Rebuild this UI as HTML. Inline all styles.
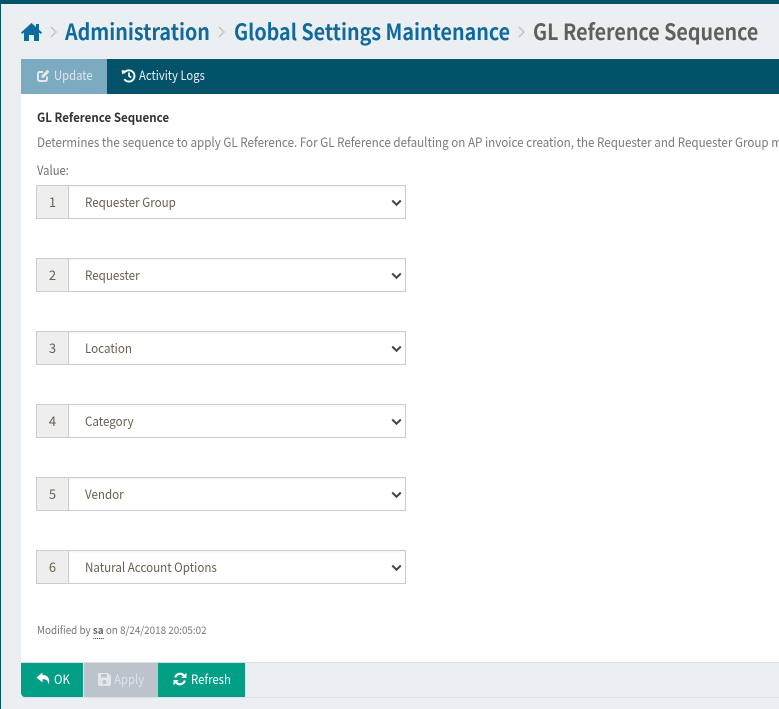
<!DOCTYPE html>
<html lang="en">
<head>
<meta charset="utf-8">
<title>GL Reference Sequence</title>
<style>
html,body{margin:0;padding:0;width:779px;height:709px;overflow:hidden;background:#eceff1}
body{position:relative;font-family:"Noto Sans CJK JP","Liberation Sans",sans-serif;color:#6b6b6b}
.a{position:absolute;white-space:nowrap;transform-origin:0 50%}
.crumb{font-size:22px;font-weight:700;line-height:30px;top:16px;color:#106a9c;transform:scaleX(.895)}
.sep{top:24px;width:16px;height:16px}
.tabtxt{font-size:13px;line-height:20px;top:65px;transform:scaleX(.867)}
.addon{position:absolute;left:36px;width:31px;height:32px;background:#eee;border:1px solid #ccc;font-size:13px;line-height:32px;text-align:center;color:#6a5f50}
.sel{position:absolute;left:69px;width:336px;height:32px;background:#fff;border:1px solid #ccc;border-left:0;box-shadow:inset 0 1px 2px rgba(0,0,0,.05);font-size:13px;line-height:32px;color:#6a5f50}
.sel span{position:absolute;left:16px;top:0;white-space:nowrap;transform-origin:0 50%;transform:scaleX(.892)}
.sel svg{position:absolute;right:3px;top:13px}
.btn{position:absolute;top:663px;height:34px;color:#fff;font-size:13px;line-height:32px}
.btn svg{position:absolute}
.btn span{position:absolute;top:0;white-space:nowrap;transform-origin:0 50%;transform:scaleX(.875)}
</style>
</head>
<body>
<div class="a" style="left:0;top:0;width:779px;height:4px;background:#02526a"></div>
<div class="a" style="left:0;top:0;width:1px;height:709px;background:#02526a"></div>

<svg class="a" style="left:21px;top:23px" width="21" height="18" viewBox="0 0 21 18"><path fill="#106a9c" d="M10.500 0L15 4V1h3v5.700L21 9.500l-1.300 1.500L18 9.500V18h-5v-6H8v6H3V9.500L1.300 11 0 9.500z"/></svg>
<svg class="a sep" style="left:46px" viewBox="0 0 16 16"><path d="M5 3l5 5-5 5" fill="none" stroke="#c4c8ca" stroke-width="1.600"/></svg>
<div class="a crumb" style="left:65px">Administration</div>
<svg class="a sep" style="left:214px" viewBox="0 0 16 16"><path d="M5 3l5 5-5 5" fill="none" stroke="#c4c8ca" stroke-width="1.600"/></svg>
<div class="a crumb" style="left:234px">Global Settings Maintenance</div>
<svg class="a sep" style="left:514px" viewBox="0 0 16 16"><path d="M5 3l5 5-5 5" fill="none" stroke="#c4c8ca" stroke-width="1.600"/></svg>
<div class="a crumb" style="left:533px;color:#5f5f5f">GL Reference Sequence</div>

<div class="a" style="left:21px;top:59px;width:758px;height:35px;background:#02526a"></div>
<div class="a" style="left:21px;top:59px;width:86px;height:35px;background:#7baac1"></div>
<svg class="a" style="left:36px;top:68px" width="15" height="15" viewBox="0 0 15 15"><path d="M11 8.500v3a1.500 1.500 0 0 1-1.500 1.500h-6A1.500 1.500 0 0 1 2 11.500v-6A1.500 1.500 0 0 1 3.500 4H7" fill="none" stroke="#dfe9ee" stroke-width="2"/><path d="M5.500 7.500L11.300 1.700l2.200 2.200L7.700 9.700H5.500z" fill="#dfe9ee"/></svg>
<div class="a tabtxt" style="left:54px;color:#dbe7ed">Update</div>
<svg class="a" style="left:121px;top:68px" width="15" height="15" viewBox="0 0 15 15"><path d="M3 5.200A5.600 5.600 0 1 1 3.300 11.200" fill="none" stroke="#fff" stroke-width="1.900"/><path d="M.6 2.200L5.600 2.600 1.300 6.600z" fill="#fff"/><path d="M8 4.500V8l2.300 1.600" fill="none" stroke="#fff" stroke-width="1.700"/></svg>
<div class="a tabtxt" style="left:139px;color:#eaf2f5">Activity Logs</div>

<div class="a" style="left:21px;top:94px;width:758px;height:568px;background:#fff"></div>
<div class="a" style="left:37px;top:108px;font-size:12.500px;font-weight:700;line-height:18px;color:#333;transform:scaleX(.923)">GL Reference Sequence</div>
<div class="a" style="left:37px;top:133px;font-size:13px;line-height:18px;color:#7b7b7b;transform:scaleX(.893)">Determines the sequence to apply GL Reference. For GL Reference defaulting on AP invoice creation, the Requester and Requester Group may</div>
<div class="a" style="left:37px;top:161px;font-size:13px;line-height:18px;color:#6f6f6f;transform:scaleX(.865)">Value:</div>

<div class="addon" style="top:185px">1</div>
<div class="sel" style="top:185px"><span>Requester Group</span><svg width="11" height="8" viewBox="0 0 11 8"><path d="M1.200 1.500L5.500 5.700 9.800 1.500" fill="none" stroke="#444" stroke-width="2"/></svg></div>
<div class="addon" style="top:258px">2</div>
<div class="sel" style="top:258px"><span>Requester</span><svg width="11" height="8" viewBox="0 0 11 8"><path d="M1.200 1.500L5.500 5.700 9.800 1.500" fill="none" stroke="#444" stroke-width="2"/></svg></div>
<div class="addon" style="top:331px">3</div>
<div class="sel" style="top:331px"><span>Location</span><svg width="11" height="8" viewBox="0 0 11 8"><path d="M1.200 1.500L5.500 5.700 9.800 1.500" fill="none" stroke="#444" stroke-width="2"/></svg></div>
<div class="addon" style="top:404px">4</div>
<div class="sel" style="top:404px"><span>Category</span><svg width="11" height="8" viewBox="0 0 11 8"><path d="M1.200 1.500L5.500 5.700 9.800 1.500" fill="none" stroke="#444" stroke-width="2"/></svg></div>
<div class="addon" style="top:477px">5</div>
<div class="sel" style="top:477px"><span>Vendor</span><svg width="11" height="8" viewBox="0 0 11 8"><path d="M1.200 1.500L5.500 5.700 9.800 1.500" fill="none" stroke="#444" stroke-width="2"/></svg></div>
<div class="addon" style="top:550px">6</div>
<div class="sel" style="top:550px"><span>Natural Account Options</span><svg width="11" height="8" viewBox="0 0 11 8"><path d="M1.200 1.500L5.500 5.700 9.800 1.500" fill="none" stroke="#444" stroke-width="2"/></svg></div>

<div class="a" style="left:37px;top:623px;font-size:10.500px;line-height:16px;color:#777;transform:scaleX(.939)">Modified by <b style="color:#666;border-bottom:1px dotted #333">sa</b> on 8/24/2018 20:05:02</div>

<div class="a" style="left:21px;top:662px;width:758px;height:1px;background:#dcdfe1"></div>
<div class="a" style="left:21px;top:697px;width:758px;height:1px;background:#dfe2e4"></div>

<div class="btn" style="left:21px;width:62px;background:#039e86;border-bottom-left-radius:4px">
<svg style="left:15px;top:9px" width="15" height="14" viewBox="0 0 15 14"><path d="M6.500 0.500L.5 5.500l6 5V7.300c3.500 0 5.500.6 6 5.200 2-5.500-.5-9.500-6-9.500z" fill="#fff"/></svg>
<span style="left:33px">OK</span></div>
<div class="btn" style="left:84px;width:74px;background:#bdc3cb;color:#dfe3e7">
<svg style="left:14px;top:10px" width="13" height="13" viewBox="0 0 13 13"><path fill-rule="evenodd" d="M1.500 0h8.500l3 3v8.500a1.500 1.500 0 0 1-1.500 1.500h-10A1.500 1.500 0 0 1 0 11.500v-10A1.500 1.500 0 0 1 1.500 0zM3 1v3.500h6V1zM6.500 7a2 2 0 1 0 0 4 2 2 0 0 0 0-4z" fill="#e4e7ea"/></svg>
<span style="left:30px">Apply</span></div>
<div class="btn" style="left:158px;width:87px;background:#039e86">
<svg style="left:15px;top:9px" width="14" height="14" viewBox="0 0 14 14"><path d="M2.200 5.500A5 5 0 0 1 10.800 3.500" fill="none" stroke="#fff" stroke-width="2.200"/><path d="M13.500.7v5.300H8.200z" fill="#fff"/><path d="M11.800 8.500A5 5 0 0 1 3.200 10.500" fill="none" stroke="#fff" stroke-width="2.200"/><path d="M.5 13.300V8h5.300z" fill="#fff"/></svg>
<span style="left:33px">Refresh</span></div>
</body>
</html>
